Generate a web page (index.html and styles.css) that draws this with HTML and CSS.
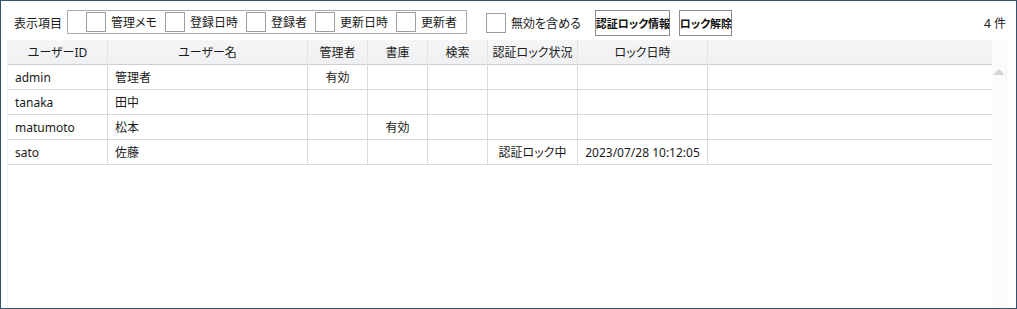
FILE: index.html
```html
<!DOCTYPE html>
<html lang="ja">
<head>
  <meta charset="UTF-8" />
  <title>ユーザー一覧</title>
  <link rel="stylesheet" href="styles.css">
</head>
<body>
  <div class="window">
    <div class="toolbar">
      <span class="caption">表示項目</span>
      <div class="columns-box">
        <label class="check"><span class="box"></span>管理メモ</label>
        <label class="check"><span class="box"></span>登録日時</label>
        <label class="check"><span class="box"></span>登録者</label>
        <label class="check"><span class="box"></span>更新日時</label>
        <label class="check"><span class="box"></span>更新者</label>
      </div>
      <label class="check include"><span class="box"></span>無効を含める</label>
      <button class="btn btn-info">認証ロック情報</button>
      <button class="btn btn-unlock">ロック解除</button>
      <span class="count">4 件</span>
    </div>

    <!-- user grid -->
    <div class="grid">
      <div class="grid-body">
        <table class="users">
          <colgroup>
            <col class="c-id">
            <col class="c-name">
            <col class="c-flag">
            <col class="c-flag">
            <col class="c-flag">
            <col class="c-lock">
            <col class="c-date">
            <col>
          </colgroup>
          <thead>
            <tr>
              <th>ユーザーID</th>
              <th>ユーザー名</th>
              <th>管理者</th>
              <th>書庫</th>
              <th>検索</th>
              <th>認証ロック状況</th>
              <th>ロック日時</th>
              <th class="last"></th>
            </tr>
          </thead>
          <tbody>
            <tr>
              <td>admin</td><td>管理者</td><td class="center">有効</td><td></td><td></td><td></td><td></td><td class="last"></td>
            </tr>
            <tr>
              <td>tanaka</td><td>田中</td><td></td><td></td><td></td><td></td><td></td><td class="last"></td>
            </tr>
            <tr>
              <td>matumoto</td><td>松本</td><td></td><td class="center">有効</td><td></td><td></td><td></td><td class="last"></td>
            </tr>
            <tr>
              <td>sato</td><td>佐藤</td><td></td><td></td><td></td><td class="center">認証ロック中</td><td class="center">2023/07/28 10:12:05</td><td class="last"></td>
            </tr>
          </tbody>
        </table>
      </div>
      <div class="scrollbar"><span class="arrow-up"></span></div>
    </div>
  </div>
</body>
</html>
```

FILE: styles.css
```css
body {
  margin: 0;
  font-family: "Noto Sans", "Noto Sans CJK JP", sans-serif;
  font-size: 12px;
  font-feature-settings: "palt";
  color: #1a1a1a;
  background: #fff;
}

.window {
  width: 1017px;
  height: 309px;
  box-sizing: border-box;
  border: 1px solid #37526b;
  background: #fff;
  display: flex;
  flex-direction: column;
}

/* Toolbar */
.toolbar {
  display: flex;
  align-items: center;
  height: 26px;
  margin-top: 9px;
  padding: 0 10px 0 13px;
}

.caption {
  margin-right: 5px;
}

.columns-box {
  display: flex;
  align-items: center;
  height: 24px;
  box-sizing: border-box;
  border: 1px solid #ababab;
  padding: 0 9px 0 18px;
  margin-top: -2px;
}

.check {
  display: flex;
  align-items: center;
  white-space: nowrap;
}

.columns-box .check + .check {
  margin-left: 8px;
}

.box {
  width: 20px;
  height: 20px;
  box-sizing: border-box;
  border: 1px solid #9e9e9e;
  background: #fff;
  margin-right: 5px;
}

.include {
  margin-left: 19px;
}

.btn {
  height: 26px;
  box-sizing: border-box;
  border: 1px solid #8c8c8c;
  background: #fff;
  font-family: "Noto Sans CJK JP", sans-serif;
  font-size: 11px;
  font-weight: bold;
  font-feature-settings: "palt";
  color: #111;
  padding: 0;
  white-space: nowrap;
  cursor: pointer;
}

.btn-info {
  width: 75px;
  margin-left: 14px;
}

.btn-unlock {
  width: 53px;
  margin-left: 9px;
}

.count {
  margin-left: auto;
}

/* Grid */
.grid {
  flex: 1;
  display: flex;
  margin: 4px 9px 0 6px;
  border-left: 1px solid #f2f2f2;
  border-right: 1px solid #f2f2f2;
}

.grid-body {
  flex: 1;
}

.users {
  width: 100%;
  table-layout: fixed;
  border-collapse: separate;
  border-spacing: 0;
}

.c-id { width: 100px; }
.c-name { width: 200px; }
.c-flag { width: 60px; }
.c-lock { width: 90px; }
.c-date { width: 130px; }

.users th {
  height: 24px;
  padding: 0;
  font-weight: normal;
  text-align: center;
  background: linear-gradient(#f6f6f7, #eff0f2);
  border-right: 1px solid #e4e4e6;
  border-bottom: 1px solid #cfcfd1;
  white-space: nowrap;
}

.users td {
  height: 24px;
  padding: 0 0 0 7px;
  border-right: 1px solid #dadada;
  border-bottom: 1px solid #d9d9d9;
  white-space: nowrap;
}

.users td.center {
  text-align: center;
  padding: 0;
}

.users .last {
  border-right: none;
}

.scrollbar {
  width: 14px;
  background: #fbfbfb;
  display: flex;
  justify-content: center;
  padding-top: 29px;
}

.arrow-up {
  width: 0;
  height: 0;
  border-left: 6px solid transparent;
  border-right: 6px solid transparent;
  border-bottom: 6px solid #d4d4d4;
}
```
